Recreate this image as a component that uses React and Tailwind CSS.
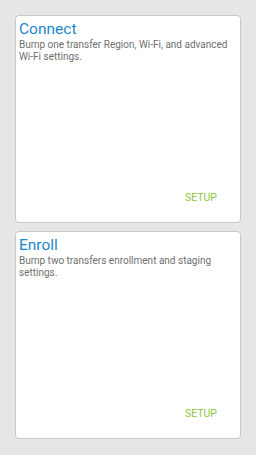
import React from "react";

const cards = [
  {
    title: "Connect",
    body: "Bump one transfer Region, Wi-Fi, and advanced Wi-Fi settings.",
  },
  {
    title: "Enroll",
    body: "Bump two transfers enrollment and staging settings.",
  },
];

const App = () => {
  return (
    <div
      className="w-[256px] h-[455px] bg-[#e6e6e6] px-[15px] pt-[15px] flex flex-col gap-[8px]"
      style={{ fontFamily: "Roboto, 'Noto Sans', sans-serif" }}
    >
      {cards.map((card) => (
        <div
          key={card.title}
          className="h-[208px] w-[226px] bg-white border border-[#c9c9c9] rounded-[4px] flex flex-col px-[3px] pt-[3px]"
        >
          <h2 className="text-[15.5px] leading-[20px] text-[#1c87c9]">
            {card.title}
          </h2>
          <p className="text-[10px] leading-[12px] text-[#6f6f6f]">
            {card.body}
          </p>
          <div className="mt-auto flex justify-end pr-[20px] pb-[18px]">
            <span className="text-[10.5px] leading-[12px] text-[#8cc63f]">
              SETUP
            </span>
          </div>
        </div>
      ))}
    </div>
  );
};

export default App;
